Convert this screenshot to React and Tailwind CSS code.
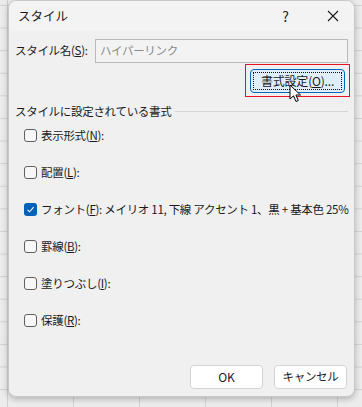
import React from "react";

const FONT = { fontFamily: '"Noto Sans CJK JP", "Noto Sans", sans-serif' };

const Check = ({ checked }) =>
  checked ? (
    <span className="w-[13px] h-[13px] rounded-[3px] bg-[#005fb8] flex items-center justify-center shrink-0">
      <svg width="9" height="9" viewBox="0 0 9 9">
        <path d="M1.5 4.8 L3.6 6.8 L7.6 2.2" fill="none" stroke="white" strokeWidth="1.1" />
      </svg>
    </span>
  ) : (
    <span className="w-[13px] h-[13px] rounded-[3px] border border-[#5f5f5f] bg-[#f7f7f7] shrink-0" />
  );

const Row = ({ label, mn, rest, checked }) => (
  <div className="flex items-center h-[37px] pl-[23px] gap-[4px]">
    <Check checked={checked} />
    <span className="text-[11.5px] tracking-[-0.3px] text-[#1a1a1a] whitespace-nowrap">
      {label}(<u>{mn}</u>):{rest}
    </span>
  </div>
);

const Cursor = () => (
  <svg className="absolute left-[289px] top-[84px]" width="14" height="20" viewBox="0 0 14 20">
    <path
      d="M1 1 L1 15 L4.5 11.8 L7 17.5 L9.3 16.5 L6.9 11 L11.5 11 Z"
      fill="white"
      stroke="black"
      strokeWidth="1"
      strokeLinejoin="round"
    />
  </svg>
);

export default function App() {
  return (
    <div
      className="w-[362px] h-[407px] relative overflow-hidden bg-[#ececec] bg-[linear-gradient(#d2d2d2_1px,transparent_1px),linear-gradient(90deg,#d2d2d2_1px,transparent_1px)] bg-[size:66px_22.6px] bg-[position:7px_5px] pl-[8px] pr-[7px] pb-[10px]"
      style={FONT}
    >
      <div className="h-full rounded-[8px] bg-[#f0f0f0] border border-[#c9c9c9] shadow-[0_2px_6px_rgba(0,0,0,0.25)] flex flex-col relative">
        <div className="h-[30px] flex items-center pl-[9px] bg-[#f3f3f3] rounded-t-[8px] text-[#1a1a1a]">
          <span className="text-[12.5px]">スタイル</span>
          <span className="ml-auto text-[14px] mr-[38px]">?</span>
          <svg className="mr-[15px]" width="12" height="12" viewBox="0 0 12 12">
            <path d="M1 1 L11 11 M11 1 L1 11" stroke="#1a1a1a" strokeWidth="1.1" />
          </svg>
        </div>

        <div className="flex items-center pl-[6px] pr-[6px] mt-[8px]">
          <span className="text-[11.5px] tracking-[-0.3px] text-[#1a1a1a] w-[80px] whitespace-nowrap">
            スタイル名(<u>S</u>):
          </span>
          <div className="flex-1 h-[24px] border border-[#b9b9b9] bg-[#f3f3f3] flex items-center pl-[4px] text-[11.5px] tracking-[-0.3px] text-[#8a8a8a]">
            ハイパーリンク
          </div>
        </div>

        <div className="flex justify-end pr-[4px] mt-[1px]">
          <div className="border-[1.5px] border-[#e81123] w-[105px] h-[33px] flex items-center justify-center">
            <div className="w-[95px] h-[24px] rounded-[4px] border border-[#0067c0] bg-[#e0eef9] p-[2px]">
              <div className="w-full h-full border border-dotted border-[#111] flex items-center justify-center text-[12px] tracking-[-0.2px] text-[#1a1a1a]">
                書式設定(<u>O</u>)...
              </div>
            </div>
          </div>
        </div>

        <div className="flex items-center pl-[6px] pr-[6px] mt-[6px]">
          <span className="text-[11.5px] tracking-[-0.3px] text-[#1a1a1a] whitespace-nowrap">スタイルに設定されている書式</span>
          <div className="flex-1 h-px bg-[#d5d5d5] ml-[4px]" />
        </div>

        <div className="flex flex-col mt-[-3px] -ml-[8px]">
          <Row label="表示形式" mn="N" />
          <Row label="配置" mn="L" />
          <Row label="フォント" mn="F" rest=" メイリオ 11, 下線 アクセント 1、黒 + 基本色 25%" checked />
          <Row label="罫線" mn="B" />
          <Row label="塗りつぶし" mn="I" />
          <Row label="保護" mn="R" />
        </div>

        <div className="mt-auto mb-[7px] flex justify-end gap-[11px] pr-[7px]">
          <button className="w-[73px] h-[24px] rounded-[4px] bg-white border border-[#d3d3d3] text-[12px] text-[#1a1a1a]">
            OK
          </button>
          <button className="w-[73px] h-[24px] rounded-[4px] bg-white border border-[#d3d3d3] text-[11.5px] tracking-[-0.3px] text-[#1a1a1a]">
            キャンセル
          </button>
        </div>
      </div>
      <Cursor />
    </div>
  );
}
